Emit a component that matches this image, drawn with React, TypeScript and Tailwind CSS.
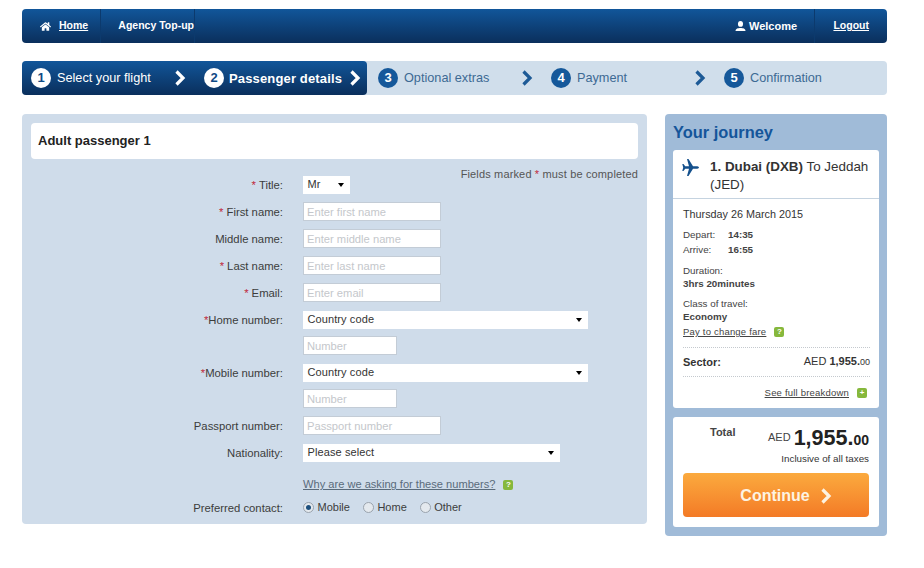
import { FaHome } from "react-icons/fa";

const font = { fontFamily: '"Liberation Sans", Arial, sans-serif' };

function Chevron({ className }: { className: string }) {
	return (
		<svg viewBox="0 0 12 16" className={className} fill="none" stroke="currentColor" strokeWidth="3.2">
			<path d="M2.500 1.500 9 8l-6.500 6.500" />
		</svg>
	);
}

function UserIcon() {
	return (
		<svg viewBox="0 0 12 11" className="h-[10px] w-[11px]" fill="currentColor">
			<ellipse cx="6" cy="3.200" rx="2.800" ry="3.200" />
			<path d="M0.500 11c0-2.500 3-3.200 5.500-3.200s5.500.7 5.500 3.200z" />
		</svg>
	);
}

function PlaneIcon() {
	return (
		<svg viewBox="0 0 17 17" className="mr-[11px] mt-[1px] h-[17px] w-[17px] shrink-0 text-[#14508c]" fill="currentColor">
			<path d="M17 8.500c0-.9-1.500-1.200-3-1.200h-3L6.500 0H5l2 7.300H3.200L1.500 5H.3l.9 3.500-.9 3.500h1.200l1.700-2.300H7L5 17h1.500L11 9.700h3c1.500 0 3-.3 3-1.200z" />
		</svg>
	);
}

function Help({ mark = "?" }: { mark?: string }) {
	return (
		<span className="inline-flex h-[10px] w-[10px] items-center justify-center rounded-[2px] bg-[#86b83c] text-[8px] font-bold leading-none text-white">
			{mark}
		</span>
	);
}

function Step({ n, label, active, bold, width }: { n: number; label: string; active?: boolean; bold?: boolean; width: string }) {
	return (
		<div className={`flex h-full shrink-0 items-center ${width}`}>
			<span
				className={`flex h-[20px] w-[20px] shrink-0 items-center justify-center rounded-full text-[13px] font-bold ${
					active ? "bg-white text-[#0f4a85]" : "bg-[#15589a] text-white"
				}`}
			>
				{n}
			</span>
			<span
				className={`whitespace-nowrap pt-[2px] ${active ? "text-white" : "text-[#3d6a94]"} ${
					bold ? "ml-[5px] text-[13px] font-bold tracking-[0.15px]" : "ml-[6px] text-[12.700px]"
				}`}
			>
				{label}
			</span>
			{n < 5 && (
				<Chevron className={`ml-auto h-[16px] w-[12px] ${active ? "text-white" : "text-[#1d5a96]"} ${bold ? "mr-[6px]" : "mr-[18px]"}`} />
			)}
		</div>
	);
}

function Row({ label, req, tight, sub, children }: { label?: string; req?: boolean; tight?: boolean; sub?: boolean; children: React.ReactNode }) {
	return (
		<div className={`flex h-[27px] items-center ${sub ? "-mt-[1px]" : ""}`}>
			<div className="w-[252px] shrink-0 pt-[1px] text-right text-[11.300px] text-[#3c3c3c]">
				{req && <span className={`text-[#c0293b] ${tight ? "" : "mr-[3px]"}`}>*</span>}
				{label}
			</div>
			<div className="ml-[20px] flex items-center">{children}</div>
		</div>
	);
}

function TextField({ placeholder, width = "w-[138px]" }: { placeholder: string; width?: string }) {
	return (
		<input
			placeholder={placeholder}
			className={`h-[19px] ${width} border border-[#c3ccd6] bg-white px-[3px] text-[11.200px] outline-none placeholder:text-[#c4c7cb]`}
		/>
	);
}

function Dropdown({ value, width }: { value: string; width: string }) {
	return (
		<div className={`flex h-[18px] items-center justify-between bg-white pl-[4.500px] pr-[6px] text-[11px] tracking-[0.1px] text-[#333] ${width}`}>
			<span>{value}</span>
			<span className="h-0 w-0 border-x-[3.500px] border-t-[4px] border-x-transparent border-t-black" />
		</div>
	);
}

function Radio({ label, checked }: { label: string; checked?: boolean }) {
	return (
		<label className="mr-[13px] flex items-center text-[11px] text-[#3c3c3c]">
			<span className="mr-[3.500px] flex h-[11px] w-[11px] items-center justify-center rounded-full border border-[#9aa3ad] bg-[#e4e9ee]">
				{checked && <span className="h-[5px] w-[5px] rounded-full bg-[#1c4f7d]" />}
			</span>
			{label}
		</label>
	);
}

function Dots() {
	return <div className="border-t border-dotted border-[#c4c9ce]" />;
}

export default function App() {
	return (
		<div className="min-h-[568px] bg-white px-[22px] pt-[9px]" style={font}>
			{/* Top bar */}
			<header className="flex h-[34px] w-[865px] items-stretch rounded-[4px] bg-gradient-to-b from-[#11569a] to-[#0a2f5c] text-[10.500px] font-bold text-white">
				<div className="flex w-[79px] items-center border-r border-[#0c3a6d] pl-[18px]">
					<FaHome className="h-[11px] w-[11px]" />
					<a className="ml-[8px] underline">Home</a>
				</div>
				<div className="flex w-[94px] items-center justify-end border-r border-[#0c3a6d]">Agency Top-up</div>
				<div className="ml-auto flex w-[80px] items-center border-r border-[#0c3a6d]">
					<UserIcon />
					<span className="ml-[3px] text-[11px]">Welcome</span>
				</div>
				<div className="flex w-[72px] items-center justify-end pr-[18px]">
					<a className="underline">Logout</a>
				</div>
			</header>

			{/* Steps */}
			<nav className="mt-[18px] flex h-[34px] w-[865px] rounded-[4px] bg-[#d0deeb]">
				<div className="flex w-[345px] shrink-0 rounded-[4px] bg-gradient-to-b from-[#11569a] to-[#0a2f5c] pl-[9px]">
					<Step n={1} label="Select your flight" active width="w-[173px]" />
					<Step n={2} label="Passenger details" active bold width="w-[163px]" />
				</div>
				<div className="flex pl-[11px]">
					<Step n={3} label="Optional extras" width="w-[173px]" />
					<Step n={4} label="Payment" width="w-[173px]" />
					<Step n={5} label="Confirmation" width="w-[150px]" />
				</div>
			</nav>

			<div className="mt-[19px] flex w-[865px] items-start justify-between">
				{/* Passenger form */}
				<main className="h-[410px] w-[625px] rounded-[4px] bg-[#cfdcea] px-[9px] pt-[9px]">
					<div className="flex h-[36px] items-center rounded-[4px] bg-white pl-[7px] text-[13px] font-bold text-[#222]">
						Adult passenger 1
					</div>
					<p className="mt-[7px] -mb-[11px] text-right text-[11px] leading-[16px] tracking-[0.15px] text-[#555]">
						Fields marked <span className="text-[#c0293b]">*</span> must be completed
					</p>
					<Row label="Title:" req>
						<Dropdown value="Mr" width="w-[47px]" />
					</Row>
					<Row label="First name:" req>
						<TextField placeholder="Enter first name" />
					</Row>
					<Row label="Middle name:">
						<TextField placeholder="Enter middle name" />
					</Row>
					<Row label="Last name:" req>
						<TextField placeholder="Enter last name" />
					</Row>
					<Row label="Email:" req>
						<TextField placeholder="Enter email" />
					</Row>
					<Row label="Home number:" req tight>
						<Dropdown value="Country code" width="w-[285px]" />
					</Row>
					<Row sub>
						<TextField placeholder="Number" width="w-[94px]" />
					</Row>
					<Row label="Mobile number:" req tight>
						<Dropdown value="Country code" width="w-[285px]" />
					</Row>
					<Row sub>
						<TextField placeholder="Number" width="w-[94px]" />
					</Row>
					<Row label="Passport number:">
						<TextField placeholder="Passport number" />
					</Row>
					<Row label="Nationality:">
						<Dropdown value="Please select" width="w-[257px]" />
					</Row>
					<div className="mt-[5px] flex h-[27px] items-center pl-[272px] text-[11.100px] text-[#5a6b7b]">
						<a className="underline">Why are we asking for these numbers?</a>
						<span className="ml-[8px] flex">
							<Help />
						</span>
					</div>
					<div className="-mt-[4px]">
						<Row label="Preferred contact:">
							<Radio label="Mobile" checked />
							<Radio label="Home" />
							<Radio label="Other" />
						</Row>
					</div>
				</main>

				{/* Journey summary */}
				<aside className="h-[422px] w-[222px] rounded-[4px] bg-[#a0bbd8] px-[8px]">
					<h2 className="flex h-[36px] items-center pt-[1px] text-[16.400px] font-bold text-[#14559a]">Your journey</h2>
					<section className="h-[258px] rounded-[3px] bg-white">
						<div className="flex h-[49px] border-b border-[#c5d3e0] pl-[9px] pr-[6px] pt-[8px] text-[13.400px] leading-[18px] text-[#333]">
							<PlaneIcon />
							<div>
								<p>
									<b>1. Dubai (DXB)</b> <span>To Jeddah</span>
								</p>
								<p>(JED)</p>
							</div>
						</div>
						<div className="pl-[10px] pr-[9px] text-[9.800px] leading-[13px] text-[#444]">
							<p className="mt-[8px] text-[10.800px] leading-[14px] text-[#333]">Thursday 26 March 2015</p>
							<div className="mt-[7px] flex">
								<span className="w-[45px]">Depart:</span>
								<b>14:35</b>
							</div>
							<div className="mt-[2px] flex">
								<span className="w-[45px]">Arrive:</span>
								<b>16:55</b>
							</div>
							<p className="mt-[8px]">Duration:</p>
							<p className="font-bold">3hrs 20minutes</p>
							<p className="mt-[7px]">Class of travel:</p>
							<p className="font-bold">Economy</p>
							<div className="mt-[2px] flex items-center">
								<a className="text-[9.500px] tracking-[0.2px] underline">Pay to change fare</a>
								<span className="ml-[8px] flex">
									<Help />
								</span>
							</div>
							<div className="mt-[9px]">
								<Dots />
							</div>
							<div className="flex h-[28px] items-center justify-between text-[11px] text-[#333]">
								<b>Sector:</b>
								<span>
									AED <b>1,955.</b>
									<span className="text-[9px]">00</span>
								</span>
							</div>
							<Dots />
							<div className="mt-[9px] flex items-center justify-end pr-[3px]">
								<a className="text-[9.500px] tracking-[0.2px] underline">See full breakdown</a>
								<span className="ml-[8px] flex">
									<Help mark="+" />
								</span>
							</div>
						</div>
					</section>
					<section className="mt-[9px] h-[110px] rounded-[3px] bg-white px-[10px]">
						<div className="flex items-start justify-between pt-[9px] text-[#222]">
							<span className="ml-[27px] text-[11px] font-bold leading-[13px] text-[#444]">Total</span>
							<span className="text-[11px] leading-[24px] text-[#444]">
								<span className="relative -top-[4px]">AED</span>{" "}
								<b className="text-[21.500px] text-[#222]">1,955.</b>
								<b className="text-[14px] text-[#222]">00</b>
							</span>
						</div>
						<p className="text-right text-[9.800px] leading-[12px] text-[#333]">Inclusive of all taxes</p>
						<button className="mt-[8px] flex h-[44px] w-full items-center justify-center rounded-[4px] bg-gradient-to-b from-[#fbaa3e] to-[#f37a26] pl-[20px] pt-[1px] text-[16px] font-bold text-[#fdf3e2]">
							Continue
							<Chevron className="ml-[10px] h-[16px] w-[12px]" />
						</button>
					</section>
				</aside>
			</div>
		</div>
	);
}
